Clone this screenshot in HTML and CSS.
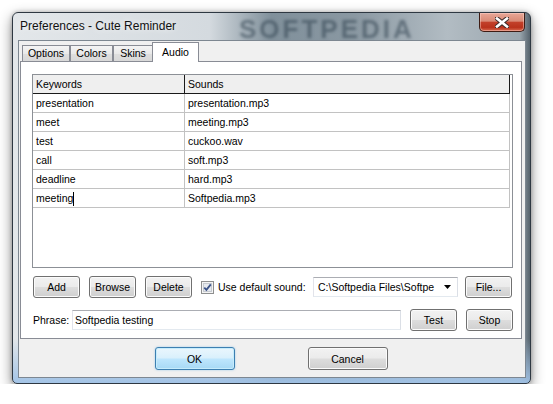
FILE: index.html
```html
<!DOCTYPE html>
<html lang="en">
<head>
    <meta charset="UTF-8">
    <title>Preferences - Cute Reminder</title>
    <link rel="stylesheet" href="styles.css">
</head>
<body>
    <div class="window">
        <div class="titlebar">
            <span class="title">Preferences - Cute Reminder</span>
            <span class="title-mark">SOFTPEDIA</span>
            <button class="close">
                <svg width="14" height="11" viewBox="0 0 14 11">
                    <path d="M2 1.5 L12 9.5 M12 1.5 L2 9.5" stroke="#3a2a28" stroke-width="4.6" stroke-linecap="square" fill="none"/>
                    <path d="M2 1.5 L12 9.5 M12 1.5 L2 9.5" stroke="#fff" stroke-width="2.6" stroke-linecap="square" fill="none"/>
                </svg>
            </button>
        </div>

        <div class="client">
            <div class="tabs">
                <div class="tab tab-options">Options</div>
                <div class="tab tab-colors">Colors</div>
                <div class="tab tab-skins">Skins</div>
                <div class="tab tab-audio active">Audio</div>
            </div>

            <div class="panel">
                <div class="list">
                    <div class="list-head">
                        <div class="kw">Keywords</div>
                        <div class="snd">Sounds</div>
                    </div>
                    <div class="row"><div class="kw">presentation</div><div class="snd">presentation.mp3</div></div>
                    <div class="row"><div class="kw">meet</div><div class="snd">meeting.mp3</div></div>
                    <div class="row"><div class="kw">test</div><div class="snd">cuckoo.wav</div></div>
                    <div class="row"><div class="kw">call</div><div class="snd">soft.mp3</div></div>
                    <div class="row"><div class="kw">deadline</div><div class="snd">hard.mp3</div></div>
                    <div class="row"><div class="kw">meeting<span class="caret"></span></div><div class="snd">Softpedia.mp3</div></div>
                </div>

                <div class="controls">
                    <button class="btn">Add</button>
                    <button class="btn">Browse</button>
                    <button class="btn">Delete</button>
                    <span class="check">
                        <svg width="13" height="13" viewBox="0 0 13 13">
                            <rect x="0.5" y="0.5" width="12" height="12" fill="#f4f4f4" stroke="#8e8f8f"/>
                            <rect x="2.5" y="2.5" width="8" height="8" fill="#e6e9ee" stroke="#c6cad0"/>
                            <path d="M3.3 6.6 L5.4 8.9 L9.8 3.4" stroke="#3a5288" stroke-width="1.8" fill="none"/>
                        </svg>
                    </span>
                    <span class="check-label">Use default sound:</span>
                    <div class="combo">
                        <span class="combo-text">C:\Softpedia Files\Softpe</span>
                        <svg class="combo-arrow" width="7" height="4" viewBox="0 0 7 4"><path d="M0 0 H7 L3.5 4 Z" fill="#000"/></svg>
                    </div>
                    <button class="btn btn-file">File...</button>
                </div>

                <div class="phrase">
                    <span class="phrase-label">Phrase:</span>
                    <div class="field">Softpedia testing</div>
                    <button class="btn btn-test">Test</button>
                    <button class="btn btn-stop">Stop</button>
                </div>
            </div>

            <div class="actions">
                <button class="btn btn-wide btn-default">OK</button>
                <button class="btn btn-wide">Cancel</button>
            </div>
        </div>
    </div>
</body>
</html>
```

FILE: styles.css
```css
* {
    box-sizing: border-box;
}

body {
    margin: 0;
    background-color: #fff;
    font-family: "Liberation Sans", Arial, sans-serif;
    font-size: 10.5px;
    color: #000;
}

.window {
    margin: 12px 0 0 12px;
    width: 519px;
    height: 372px;
    border: 1px solid #2e3842;
    border-radius: 6px 6px 5px 5px;
    box-shadow: 0 5px 14px rgba(0, 0, 0, 0.45), 0 0 4px rgba(0, 0, 0, 0.25);
    background:
        linear-gradient(to bottom, rgba(170, 200, 232, 0) 88%, rgba(160, 194, 230, 0.95) 100%),
        linear-gradient(90deg, #e3e7ea 0%, #d4dadf 38%, #80909b 50%, #8a98a2 66%, #b2bcc3 84%, #9aa6ae 98%, #56636d 100%);
    display: flex;
    flex-direction: column;
    padding-bottom: 5px;
}

/* title bar */

.titlebar {
    height: 27px;
    display: flex;
    justify-content: space-between;
    align-items: flex-start;
    padding: 0 5px 0 7px;
    position: relative;
}

.title {
    line-height: 27px;
    font-size: 12px;
    color: #111;
    text-shadow: 0 0 6px rgba(255, 255, 255, 0.9);
    position: relative;
    z-index: 1;
}

.title-mark {
    position: absolute;
    left: 226px;
    top: 1px;
    font-family: "Liberation Sans", sans-serif;
    font-weight: bold;
    font-size: 26px;
    letter-spacing: 3px;
    color: rgba(40, 58, 72, 0.5);
    filter: blur(1.4px);
}

.close {
    width: 46px;
    height: 19px;
    padding: 0;
    border: 1px solid #3e1c14;
    border-top: none;
    border-radius: 0 0 5px 5px;
    background: linear-gradient(#e8a797 0%, #d98a76 45%, #c2402a 52%, #b9321c 80%, #d86a50 100%);
    box-shadow: inset 0 0 0 1px rgba(255, 220, 210, 0.45);
    display: flex;
    align-items: center;
    justify-content: center;
    position: relative;
    z-index: 1;
}

/* client area */

.client {
    margin: 0 4px 0 5px;
    height: 338px;
    border: 1px solid #7d8791;
    background-color: #f0f0f0;
    padding: 0 3px 0 1px;
    display: flex;
    flex-direction: column;
}

.tabs {
    display: flex;
    align-items: flex-end;
    height: 20px;
    padding-left: 2px;
}

.tab {
    height: 16px;
    line-height: 15px;
    text-align: center;
    border: 1px solid #898c95;
    border-bottom: none;
    background: linear-gradient(#f4f4f4, #e9e9e9 50%, #dedede 55%, #d8d8d8);
}

.tab-options { width: 48px; }
.tab-colors { width: 43px; }
.tab-skins { width: 40px; }

.tab.active {
    width: 47px;
    height: 20px;
    line-height: 18px;
    margin-left: -1px;
    margin-bottom: -1px;
    background: #fff;
    position: relative;
    z-index: 1;
}

.panel {
    height: 278px;
    border: 1px solid #898c95;
    background-color: #fff;
    padding: 12px 8px 0 11px;
}

/* list view */

.list {
    height: 194px;
    border: 1px solid #8c9096;
    background-color: #fff;
}

.list-head {
    display: flex;
    height: 19px;
    background: #efefef;
    border-bottom: 1px solid #1a1a1a;
    width: 477px;
}

.list-head div {
    line-height: 18px;
    padding-left: 3px;
    border-right: 1px solid #1a1a1a;
}

.kw {
    width: 152px;
}

.snd {
    width: 325px;
}

.row {
    display: flex;
    height: 19px;
    width: 477px;
    border-bottom: 1px solid #c2c2c2;
}

.row div {
    line-height: 18px;
    padding-left: 3px;
    border-right: 1px solid #c2c2c2;
}

.caret {
    display: inline-block;
    width: 1px;
    height: 14px;
    background: #000;
    vertical-align: -4px;
}

/* buttons and inputs */

.btn {
    width: 47px;
    height: 22px;
    padding: 0;
    flex-shrink: 0;
    font: inherit;
    color: #000;
    border: 1px solid #707070;
    border-radius: 3px;
    background: linear-gradient(#f2f2f2 0%, #ebebeb 48%, #dddddd 52%, #cfcfcf 100%);
    box-shadow: inset 0 0 0 1px #fbfbfb;
}

.controls {
    display: flex;
    align-items: center;
    height: 22px;
    margin-top: 8px;
    padding-left: 1px;
}

.controls .btn {
    margin-right: 9px;
}

.check {
    display: flex;
    height: 13px;
    flex-shrink: 0;
}

.check-label {
    width: 87px;
    margin-left: 4px;
    margin-right: 8px;
    white-space: nowrap;
    flex-shrink: 0;
}

.combo {
    width: 145px;
    height: 20px;
    flex-shrink: 0;
    border: 1px solid #abadb3;
    border-color: #abadb3 #dbdfe6 #e3e9ef #e2e3ea;
    display: flex;
    align-items: center;
    padding: 0 4px 0 4px;
    margin-right: 7px;
    background: #fff;
}

.combo-text {
    width: 120px;
    white-space: nowrap;
}

.combo-arrow {
    margin-left: 6px;
}

.controls .btn-file {
    margin-right: 0;
}

.phrase {
    display: flex;
    align-items: center;
    height: 22px;
    margin-top: 11px;
    padding-left: 1px;
}

.phrase-label {
    width: 39px;
}

.field {
    width: 329px;
    height: 20px;
    line-height: 18px;
    padding-left: 2px;
    border: 1px solid #abadb3;
    border-color: #abadb3 #dbdfe6 #e3e9ef #e2e3ea;
}

.btn-test,
.btn-stop {
    margin-left: 9px;
}

.actions {
    display: flex;
    justify-content: center;
    gap: 73px;
    padding-top: 8px;
}

.btn-wide {
    width: 80px;
    height: 23px;
}

.btn-default {
    border-color: #3c7fb1;
    background: linear-gradient(#eaf6fd 0%, #d9f0fc 48%, #bee6fd 52%, #a7d9f5 100%);
    box-shadow: inset 0 0 0 1px #c6ecfc, 0 0 2px rgba(60, 160, 230, 0.5);
}
```
